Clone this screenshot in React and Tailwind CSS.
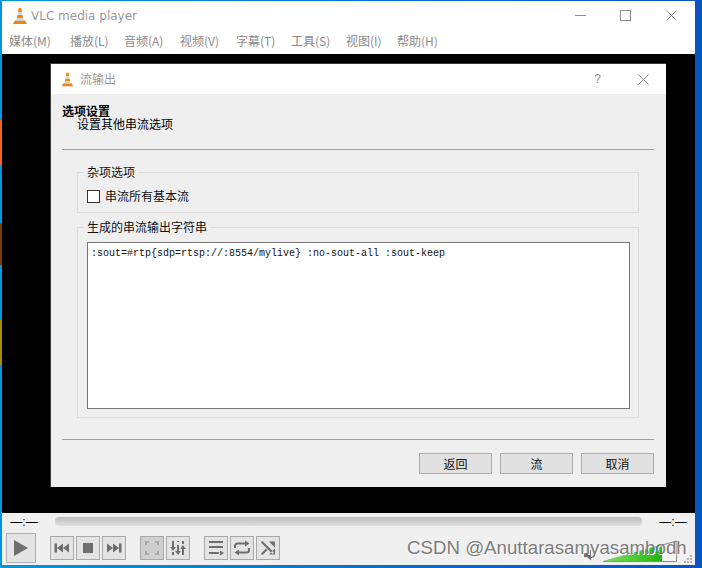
import React from "react";

const cjk = "font-['Noto_Sans_CJK_SC',sans-serif]";

const menus = [
  ["媒体(M)", "w-[61px]"],
  ["播放(L)", "w-[54px]"],
  ["音频(A)", "w-[56px]"],
  ["视频(V)", "w-[56px]"],
  ["字幕(T)", "w-[55px]"],
  ["工具(S)", "w-[55px]"],
  ["视图(I)", "w-[51px]"],
  ["帮助(H)", "w-[50px]"],
];

// colour chips of the desktop showing through at the left edge
const desktopEdge = [
  ["h-[45px]", "bg-[#f0642c]"],
  ["h-[58px]", "bg-[#0095e0]"],
  ["h-[42px]", "bg-[#7a3a0c]"],
  ["h-[55px]", "bg-[#0095e0]"],
  ["h-[45px]", "bg-[#a88c10]"],
];

function Cone({ size = 18 }) {
  return (
    <svg width={size} height={size} viewBox="0 0 18 18">
      <path d="M2 17 L4 13.500 H14 L16 17 Z" fill="#ee8508" />
      <path d="M7.600 1 H10.400 L11 5 H7 Z" fill="#f08a10" />
      <path d="M7 5 H11 L11.500 8 H6.500 Z" fill="#d8d8d8" />
      <path d="M6.500 8 H11.500 L12.200 11 H5.800 Z" fill="#f08a10" />
      <path d="M5.800 11 H12.200 L12.800 14 H5.200 Z" fill="#cfcfcf" />
    </svg>
  );
}

function CloseGlyph({ size = 11 }) {
  return (
    <svg width={size} height={size} viewBox="0 0 11 11" stroke="#8c8c8c" strokeWidth="1" fill="none">
      <path d="M0.500 0.500 L10.500 10.500 M10.500 0.500 L0.500 10.500" />
    </svg>
  );
}

function CtrlButton({ children, active }) {
  return (
    <div className={`flex h-[24px] w-[24px] items-center justify-center border border-[#a8a8a8] ${active ? "bg-[#cfcfcf]" : "bg-[#e4e4e4]"}`}>
      <svg width="20" height="20" viewBox="0 0 20 20" fill="#6e6e6e" stroke="none">
        {children}
      </svg>
    </div>
  );
}

function GroupBox({ title, className, children }) {
  return (
    <fieldset className={`border border-[#dcdcdc] ${className}`}>
      <legend className={`ml-[6px] px-[3px] text-[12px] leading-[14px] text-[#111] ${cjk}`}>{title}</legend>
      {children}
    </fieldset>
  );
}

function DialogButton({ label }) {
  return (
    <button className={`h-[21px] w-[73px] border border-[#adadad] bg-[#e1e1e1] text-[12px] leading-[18px] text-[#111] ${cjk}`}>
      {label}
    </button>
  );
}

function TimeLabel() {
  return (
    <span className="block w-[30px] shrink-0 text-center font-['Liberation_Sans',sans-serif] text-[12px] leading-[10px] text-black">
      —:—
    </span>
  );
}

export default function App() {
  return (
    <div className="flex h-[568px] w-[702px] overflow-hidden bg-gradient-to-r from-[#0095e0] to-[#0a52c4] pb-[3px]">
      <div className="flex w-[2px] flex-col bg-[#0095e0] pt-[120px]">
        {desktopEdge.map(([h, c], i) => (
          <div key={i} className={`${h} ${c}`} />
        ))}
      </div>

      <div className="mt-[1px] flex w-[693px] flex-col bg-white">
        {/* title bar */}
        <div className="flex h-[29px] items-center pl-[9px]">
          <Cone size={18} />
          <span className="ml-[2px] font-['DejaVu_Sans',sans-serif] text-[12px] text-[#9a9a9a]">VLC media player</span>
          <div className="ml-auto flex items-center pr-[18px]">
            <div className="h-px w-[11px] bg-[#8c8c8c]" />
            <div className="ml-[34px] h-[11px] w-[11px] border border-[#8c8c8c]" />
            <div className="ml-[35px]">
              <CloseGlyph />
            </div>
          </div>
        </div>

        {/* menu bar */}
        <div className={`flex h-[24px] items-center pl-[7px] pb-[2px] text-[12px] text-[#8a8a8a] ${cjk}`}>
          {menus.map(([label, w]) => (
            <span key={label} className={w}>
              {label}
            </span>
          ))}
        </div>

        {/* video area with the dialog on top */}
        <div className="h-[459px] bg-black pl-[48px] pt-[9px]">
          <div className="flex h-[424px] w-[616px] flex-col border-l border-t border-[#3a3a3a] bg-[#efefef]">
            <div className="flex h-[30px] shrink-0 items-center bg-white pl-[9px]">
              <Cone size={15} />
              <span className={`ml-[5px] text-[12px] text-[#9a9a9a] ${cjk}`}>流输出</span>
              <div className="ml-auto flex items-center pr-[17px]">
                <span className="font-['Liberation_Sans',sans-serif] text-[12px] text-[#8c8c8c]">?</span>
                <div className="ml-[37px]">
                  <CloseGlyph />
                </div>
              </div>
            </div>

            <div className="flex flex-1 flex-col pl-[11px] pr-[12px]">
              <div className={`mt-[10px] text-[12px] font-bold leading-[13px] text-black ${cjk}`}>选项设置</div>
              <div className={`ml-[15px] text-[12px] leading-[13px] text-black ${cjk}`}>设置其他串流选项</div>
              <div className="mt-[19px] h-px bg-[#a0a0a0]" />

              <GroupBox title="杂项选项" className="mx-[15px] mt-[15px] h-[48px]">
                <label className={`ml-[9px] mt-[10px] flex items-center gap-[5px] text-[12px] leading-[14px] text-[#111] ${cjk}`}>
                  <span className="h-[13px] w-[13px] border border-[#333] bg-white" />
                  串流所有基本流
                </label>
              </GroupBox>

              <GroupBox title="生成的串流输出字符串" className="mx-[15px] mt-[7px] h-[198px]">
                <div className="ml-[9px] mr-[8px] mt-[8px] h-[167px] border border-[#777] bg-white px-[3px] pt-[4px] font-['Liberation_Mono',monospace] text-[10px] leading-[14px] text-[#111]">
                  :sout=#rtp{"{"}sdp=rtsp://:8554/mylive{"}"} :no-sout-all :sout-keep
                </div>
              </GroupBox>

              <div className="mt-[21px] h-px bg-[#a0a0a0]" />
              <div className="mt-[13px] flex justify-end gap-[8px]">
                <DialogButton label="返回" />
                <DialogButton label="流" />
                <DialogButton label="取消" />
              </div>
            </div>
          </div>
        </div>

        {/* playback controls */}
        <div className="relative flex flex-1 flex-col bg-[#f0f0f0]">
          <div className="flex h-[20px] items-start px-[7px] pt-[4px]">
            <TimeLabel />
            <div className="mx-[16px] h-[9px] flex-1 rounded-[4px] bg-gradient-to-b from-[#bdbdbd] to-[#e0e0e0]" />
            <TimeLabel />
          </div>

          <div className="flex h-[30px] items-center pl-[4px]">
            <div className="flex h-[30px] w-[30px] items-center justify-center border border-[#b0b0b0] bg-[#e4e4e4]">
              <svg width="16" height="18" viewBox="0 0 16 18">
                <path d="M1 1 L15 9 L1 17 Z" fill="#6e6e6e" />
              </svg>
            </div>

            <div className="ml-[14px] flex gap-[2px]">
              <CtrlButton>
                <path d="M2.500 5.500H5v9H2.500zM5 10l6-4.500v9zM11 10l6-4.500v9z" />
              </CtrlButton>
              <CtrlButton>
                <path d="M5 5h10v10H5z" />
              </CtrlButton>
              <CtrlButton>
                <path d="M15 5.500h2.500v9H15zM3 5.500l6 4.500-6 4.500zM9 5.500l6 4.500-6 4.500z" />
              </CtrlButton>
            </div>

            <div className="ml-[14px] flex gap-[2px]">
              <CtrlButton active>
                <path d="M3 3h4v2H5v2H3zM13 3h4v4h-2V5h-2zM3 13h2v2h2v2H3zM15 13h2v4h-4v-2h2z" fill="#a8a8a8" />
              </CtrlButton>
              <CtrlButton>
                <path d="M4 3h2v6h2l-3 4-3-4h2zM4 14h2v3H4zM9 3h2v1H9zM9 7h2v6h2l-3 4-3-4h2zM15 7l3 4h-2v6h-2v-6h-2zM14 3h2v3h-2z" />
              </CtrlButton>
            </div>

            <div className="ml-[14px] flex gap-[2px]">
              <CtrlButton>
                <path d="M3 3h14v2H3zM3 8h14v2H3zM3 14h10v2H3zM14 12.500l4 2.500-4 2.500z" />
              </CtrlButton>
              <CtrlButton>
                <path d="M3 10V8a2.500 2.500 0 0 1 2.500-2.500H13" fill="none" stroke="#6e6e6e" strokeWidth="2" />
                <path d="M13 2.500l4.500 3-4.500 3z" />
                <path d="M17 10v2a2.500 2.500 0 0 1-2.500 2.500H7" fill="none" stroke="#6e6e6e" strokeWidth="2" />
                <path d="M7 11.500l-4.500 3 4.500 3z" />
              </CtrlButton>
              <CtrlButton>
                <path d="M3 4.500l1.500-1.500L16 14.500l-1.500 1.500zM11 3.500h6v6zM11 16.500h6v-6zM3 15.500L8 10.500l1.500 1.500-5 5z" />
              </CtrlButton>
            </div>

            {/* volume */}
            <div className="ml-auto mr-[3px] flex items-end self-end">
              <svg width="14" height="12" viewBox="0 0 14 12" className="mb-[2px] mr-[6px]">
                <path d="M1 4h3l4-3.500v11L4 8H1z" fill="#6e6e6e" />
                <path d="M10 2c2 2 2 6 0 8" stroke="#e8820c" strokeWidth="1.200" fill="none" />
              </svg>
              <svg width="74" height="22" viewBox="0 0 74 22" className="mb-[1px]">
                <defs>
                  <linearGradient id="vol" x1="0" y1="0" x2="1" y2="0">
                    <stop offset="0" stopColor="#7fe05a" />
                    <stop offset="1" stopColor="#22b414" />
                  </linearGradient>
                </defs>
                <path d="M0.500 21.500 L73.500 1 V21.500 Z" fill="#f4f4f4" stroke="#8a8a8a" />
                <path d="M1 21 L59 5 V21 Z" fill="url(#vol)" />
              </svg>
              <div className="ml-[7px] grid grid-cols-3 gap-px">
                <span className="col-start-3 h-[2px] w-[2px] bg-[#b4b4b4]" />
                <span className="col-start-2 h-[2px] w-[2px] bg-[#b4b4b4]" />
                <span className="h-[2px] w-[2px] bg-[#b4b4b4]" />
                <span className="h-[2px] w-[2px] bg-[#b4b4b4]" />
                <span className="h-[2px] w-[2px] bg-[#b4b4b4]" />
                <span className="h-[2px] w-[2px] bg-[#b4b4b4]" />
              </div>
            </div>
          </div>

          {/* site watermark */}
          <span className="absolute left-[405px] top-[25px] font-['Liberation_Sans',sans-serif] text-[18.700px] leading-[20px] text-[#7c7c7c] [text-shadow:1px_1px_0_#ffffff]">
            CSDN @Anuttarasamyasambodh
          </span>
        </div>
      </div>
    </div>
  );
}
